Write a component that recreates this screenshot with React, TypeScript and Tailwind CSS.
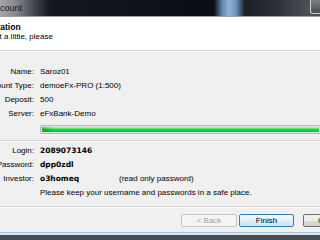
const rows = [
  { label: 'Name:', value: 'Saroz01' },
  { label: 'Account Type:', value: 'demoeFx-PRO (1:500)' },
  { label: 'Deposit:', value: '500' },
  { label: 'Server:', value: 'eFxBank-Demo' },
];

const creds = [
  { label: 'Login:', value: '2089073146', note: '' },
  { label: 'Password:', value: 'dpp0zdl', note: '' },
  { label: 'Investor:', value: 'o3homeq', note: '(read only password)' },
];

function Label({ children }: { children: React.ReactNode }) {
  return <div className="w-[80px] -ml-[46px] shrink-0 text-right">{children}</div>;
}

export default function App() {
  return (
    <div className="w-[320px] h-[240px] overflow-hidden bg-[#f0f0f0] flex flex-col font-['Liberation_Sans',Arial,sans-serif] text-[8px] text-black">
      {/* Title bar */}
      <div className="h-[16px] shrink-0 flex items-start justify-between bg-[linear-gradient(90deg,#a3a6aa_0px,#8a8d91_14px,#4a4d53_32px,#14171d_50px,#0a0d13_214px,#5f86ad_222px,#8db2d7_229px,#6d93ba_236px,#1b1f25_245px,#2b2f35_275px,#4c4f54_308px)]">
        <div className="-ml-[47px] pt-[3px] text-[9px] leading-[10px] text-[#1a1020] whitespace-nowrap">Open an Account</div>
        <div className="w-[10px] h-[14px] border border-r-0 border-t-0 border-[#c9ccd0] rounded-bl-[3px] bg-[linear-gradient(180deg,#7a7d81,#4a4d52)]" />
      </div>
      <div className="h-px shrink-0 bg-[#9a9da1]" />

      {/* Header */}
      <div className="h-[33px] shrink-0 bg-white pt-[6px] whitespace-nowrap">
        <div className="-ml-[29px] font-bold text-[8.5px] leading-[9px]">Registration</div>
        <div className="-ml-[14px] leading-[9px]">Wait a little, please</div>
      </div>
      <div className="h-px shrink-0 bg-[#d2d2d2]" />
      <div className="h-px shrink-0 bg-[#fbfbfb]" />

      {/* Account info */}
      <div className="pt-[13px] flex flex-col whitespace-nowrap">
        {rows.map((r) => (
          <div key={r.label} className="flex leading-[14px]">
            <Label>{r.label}</Label>
            <div className="ml-[6px]">{r.value}</div>
          </div>
        ))}
        <div className="flex mt-[4px]">
          <div className="w-[40px] shrink-0" />
          <div className="flex-1 h-[9px] border border-r-0 border-[#b8b8b8] rounded-l-[2px] bg-[#e4e4e4] p-px">
            <div className="h-full bg-[linear-gradient(90deg,rgba(0,90,20,0.35)_0px,rgba(0,90,20,0)_12px),linear-gradient(180deg,#c2f7c2_0%,#5ee778_30%,#0bd633_55%,#0ac92f_100%)]" />
          </div>
        </div>
      </div>

      <div className="mt-[6px] h-px shrink-0 bg-[#d2d2d2]" />
      <div className="h-px shrink-0 bg-[#fbfbfb]" />

      {/* Credentials */}
      <div className="pt-[2px] flex flex-col whitespace-nowrap">
        {creds.map((c) => (
          <div key={c.label} className="flex leading-[14px]">
            <Label>{c.label}</Label>
            <div className="ml-[6px] w-[79px] shrink-0 font-['DejaVu_Sans',sans-serif] font-bold text-[7.5px]">{c.value}</div>
            <div>{c.note}</div>
          </div>
        ))}
        <div className="flex leading-[14px]">
          <div className="w-[40px] shrink-0" />
          <div>Please keep your username and passwords in a safe place.</div>
        </div>
      </div>

      <div className="mt-[6px] h-px shrink-0 bg-[#d2d2d2]" />
      <div className="h-px shrink-0 bg-[#fbfbfb]" />

      {/* Buttons */}
      <div className="pt-[6px] pl-[181px] flex items-center whitespace-nowrap">
        <button className="w-[56px] h-[13px] shrink-0 border border-[#c3c7ca] rounded-[2px] bg-[#f4f4f4] text-[#a2a2a2] leading-[11px]">&lt; Back</button>
        <button className="ml-[2px] w-[55px] h-[13px] shrink-0 border border-[#3d7bad] rounded-[2px] bg-[linear-gradient(180deg,#f0f8fd_0%,#e4f2fb_50%,#d6ecf9_51%,#cbe5f6_100%)] leading-[11px]">Finish</button>
        <button className="ml-[9px] w-[55px] h-[13px] shrink-0 border border-[#707070] rounded-[2px] bg-[linear-gradient(180deg,#f2f2f2_0%,#ebebeb_50%,#dddddd_51%,#cfcfcf_100%)] leading-[11px]">Cancel</button>
      </div>

      {/* Window frame bottom */}
      <div className="mt-[5px] h-px shrink-0 bg-[#a9c4e2]" />
      <div className="h-[2px] shrink-0 bg-[#d7e5f3]" />
      <div className="flex-1 bg-[#4a4e55]" />
    </div>
  );
}
